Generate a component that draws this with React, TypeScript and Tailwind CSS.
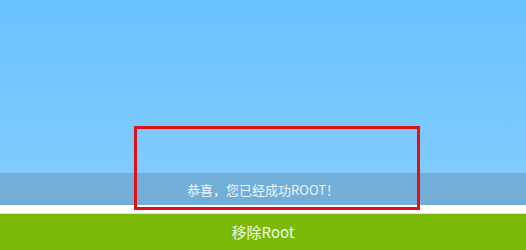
export default function App() {
  return (
    <div
      className="relative w-[526px] h-[250px] flex flex-col overflow-hidden"
      style={{ fontFamily: '"Noto Sans CJK SC", "Noto Sans", sans-serif' }}
    >
      <div className="h-[173px] bg-gradient-to-b from-[#69c2fe] to-[#80cbfe]" />
      <div className="h-[32px] bg-[#72aed8] flex items-center justify-center pt-[2px] text-[13px] text-[#eef5fb]">
        恭喜，您已经成功ROOT！
      </div>
      <div className="h-[9px] bg-white border-b border-[#d9ecc0]" />
      <div className="flex-1 bg-[#7aba07] flex items-center justify-center text-[15px] text-[#f2f8e6]">
        移除Root
      </div>
      <div className="absolute left-[134px] top-[126px] w-[286px] h-[84px] border-[3px] border-[#e0101a]" />
    </div>
  )
}
